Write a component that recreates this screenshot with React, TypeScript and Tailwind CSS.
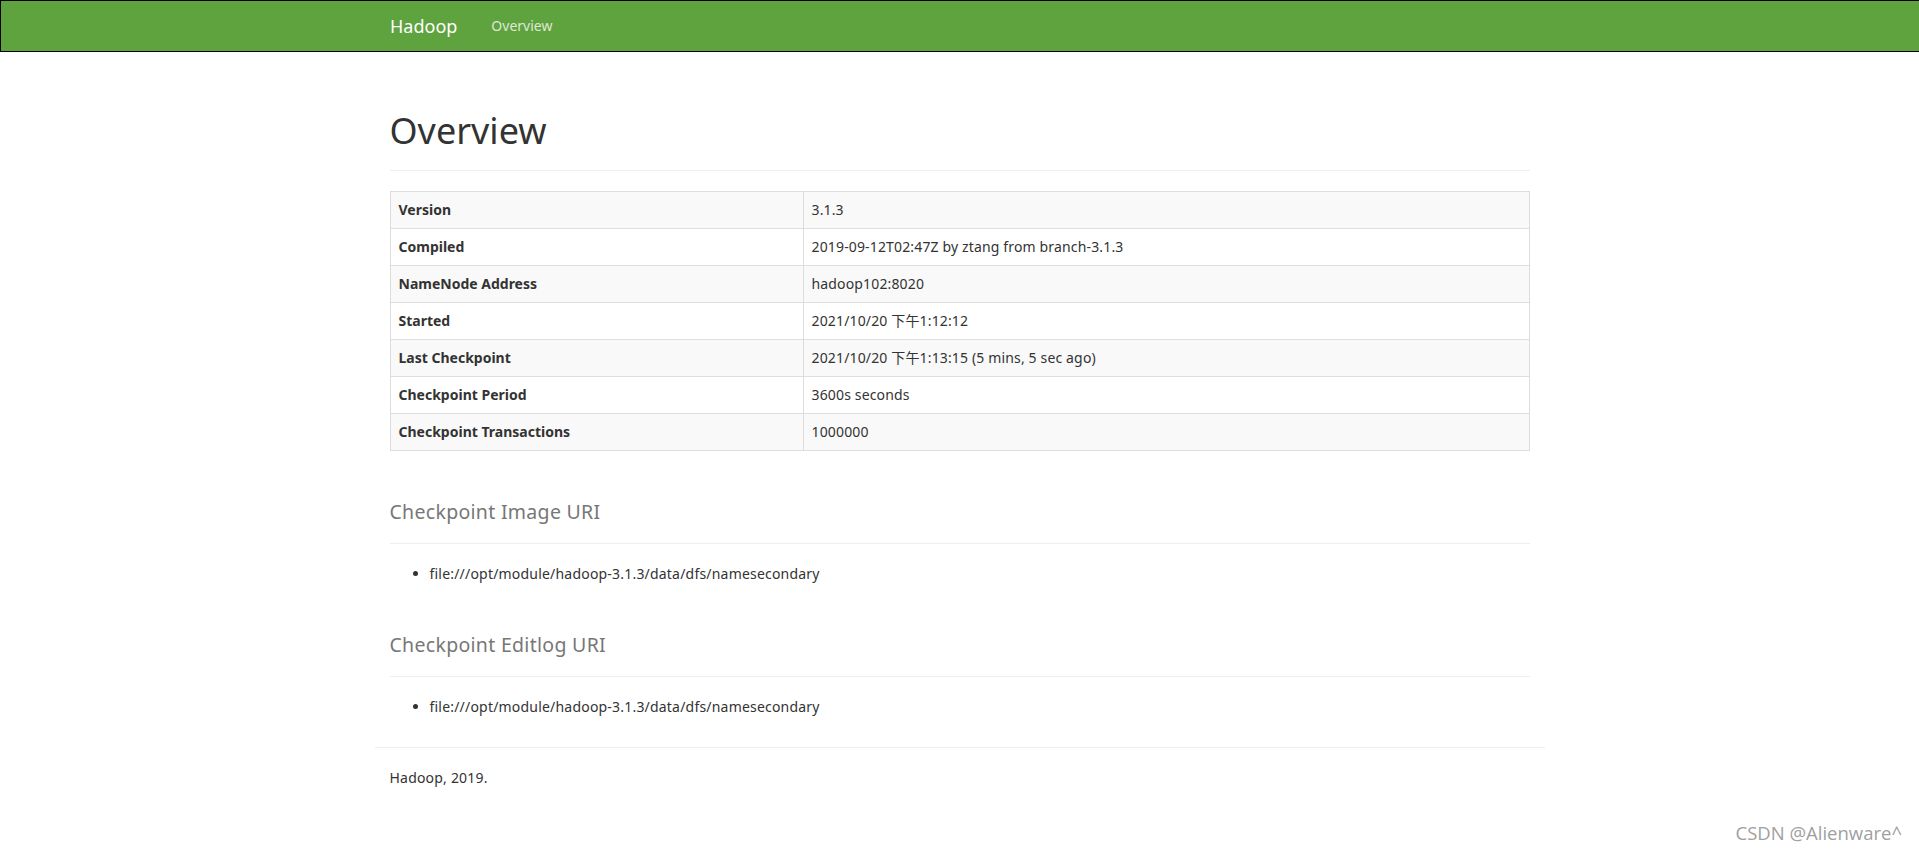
const info: [string, string][] = [
  ['Version', '3.1.3'],
  ['Compiled', '2019-09-12T02:47Z by ztang from branch-3.1.3'],
  ['NameNode Address', 'hadoop102:8020'],
  ['Started', '2021/10/20 下午1:12:12'],
  ['Last Checkpoint', '2021/10/20 下午1:13:15 (5 mins, 5 sec ago)'],
  ['Checkpoint Period', '3600s seconds'],
  ['Checkpoint Transactions', '1000000'],
]

const uri = 'file:///opt/module/hadoop-3.1.3/data/dfs/namesecondary'

function Section({ title }: { title: string }) {
  return (
    <>
      <div className="mt-10 pb-[9px] border-b border-[#eee]">
        <h2 className="text-[30px] leading-[33px] mb-[10px]">
          <small className="text-[19.5px] leading-[21.45px] text-[#777] font-normal tracking-[0.3px]">{title}</small>
        </h2>
      </div>
      <ul className="mt-5 pl-10 list-disc tracking-[0.2px]">
        <li>{uri}</li>
      </ul>
    </>
  )
}

export default function App() {
  return (
    <div className="relative min-h-[853px] bg-white text-[#333] text-[14px] leading-[20px] font-['Noto_Sans','Noto_Sans_CJK_SC',sans-serif]">
      {/* navbar */}
      <nav className="h-[52px] bg-[#5fa33e] border-t border-l border-b border-black">
        <div className="w-[1170px] mx-auto px-[15px] flex items-center h-full">
          <a className="-ml-[15px] px-[15px] text-[18px] leading-[20px] text-white">Hadoop</a>
          <a className="ml-1 px-[15px] leading-[20px] text-[#dde8d6]">Overview</a>
        </div>
      </nav>

      <div className="w-[1170px] mx-auto px-[15px]">
        <div className="mt-[59px] pb-[9px] border-b border-[#eee]">
          <h1 className="text-[36px] leading-[39.6px] font-normal mb-[10px]">Overview</h1>
        </div>

        <table className="mt-5 w-full border-collapse border border-[#ddd]">
          <tbody>
            {info.map(([k, v], i) => (
              <tr key={k} className={i % 2 === 0 ? 'bg-[#f9f9f9]' : ''}>
                <th className="w-[413px] border border-[#ddd] p-2 text-left font-bold">{k}</th>
                <td className="border border-[#ddd] p-2 tracking-[0.15px]">{v}</td>
              </tr>
            ))}
          </tbody>
        </table>

        <Section title="Checkpoint Image URI" />
        <Section title="Checkpoint Editlog URI" />

        <hr className="-mx-[15px] mt-[30px] border-[#eee]" />
        <p className="mt-5 mb-[10px] tracking-[0.2px]">Hadoop, 2019.</p>
      </div>

      {/* watermark */}
      <div className="absolute right-[17px] bottom-[8px] text-[18.5px] leading-[24px] text-[#a0a0a0] font-['Open_Sans',sans-serif]">
        CSDN @Alienware^
      </div>
    </div>
  )
}
